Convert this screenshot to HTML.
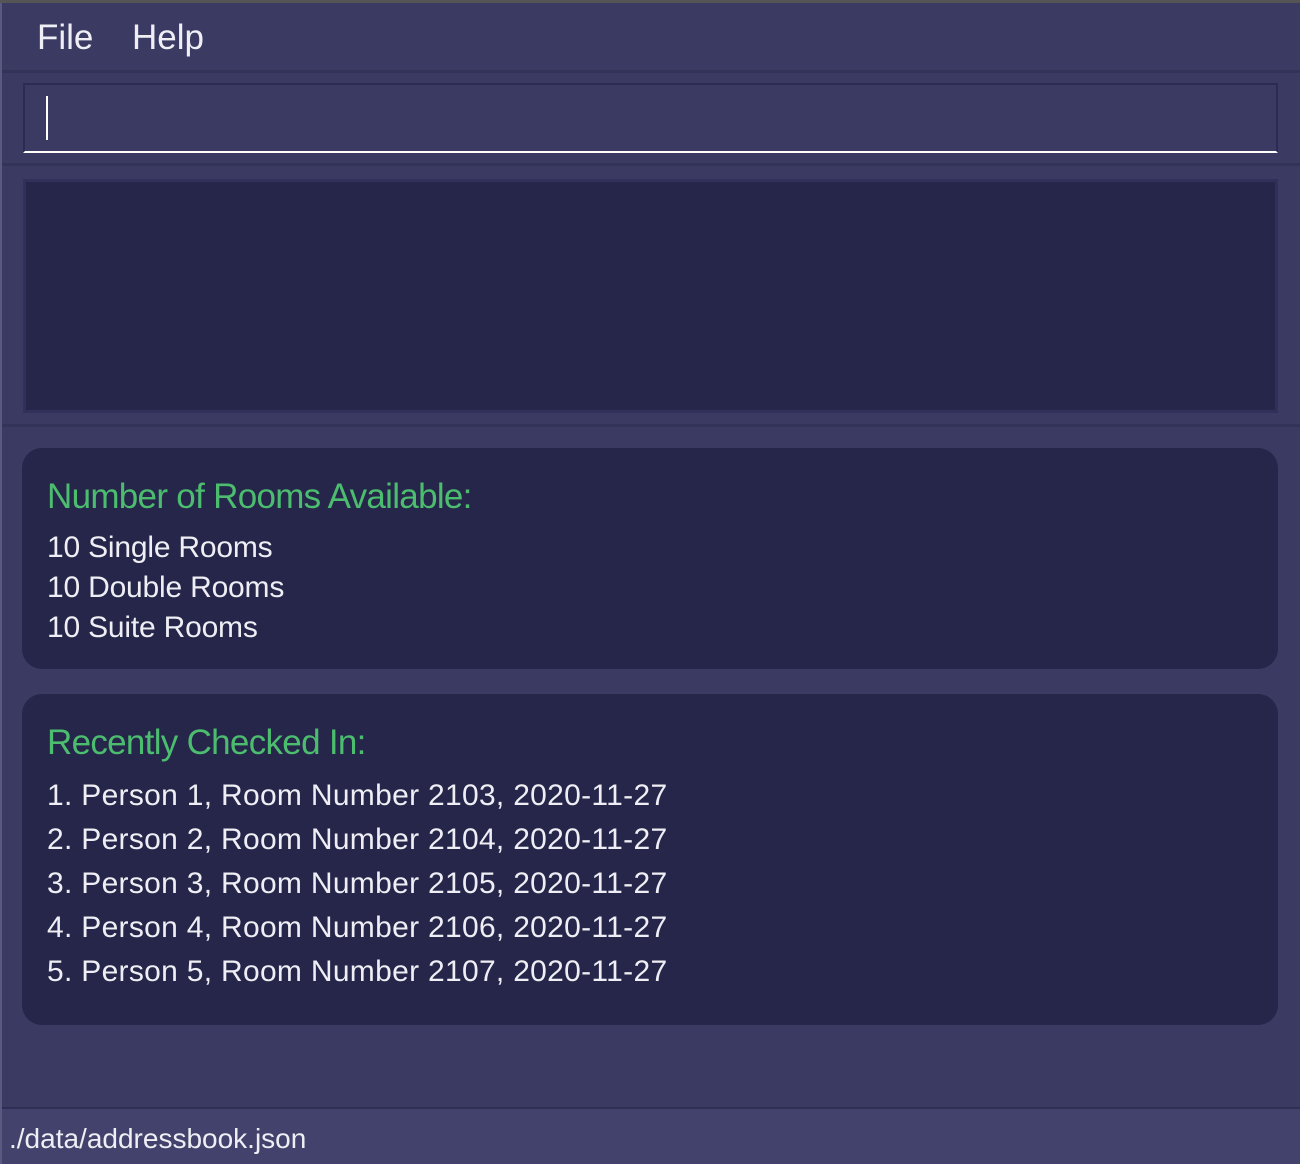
<!DOCTYPE html>
<html><head><meta charset="utf-8"><style>
*{margin:0;padding:0;box-sizing:border-box}
body{width:1300px;height:1164px;background:#3a3a63;font-family:"Liberation Sans",sans-serif;position:relative;overflow:hidden;color:#eeeef4}
.topb{position:absolute;left:0;top:0;width:1300px;height:3px;background:#555}
.leftb{position:absolute;left:0;top:3px;width:2px;height:1161px;background:#5a5a80}
.menu{position:absolute;top:18px;font-size:35px;letter-spacing:0}
.sep{position:absolute;left:2px;right:0;height:3px;background:#33335a}
.cmd{position:absolute;left:23px;top:83px;width:1255px;height:70px;border:2px solid #2c2c52;border-bottom:2px solid #fff;background:#3a3a63}
.caret{position:absolute;left:46px;top:96px;width:2px;height:44px;background:#fff}
.res{position:absolute;left:23px;top:179px;width:1255px;height:234px;background:#25264a;border:3px solid #30315a}
.card{position:absolute;left:22px;width:1256px;background:#25264a;border-radius:20px;padding-left:25px}
.h{color:#4cbd6f;font-size:35px;letter-spacing:-0.7px}
.l{font-size:30px}
.status{position:absolute;left:2px;top:1107px;width:1298px;height:57px;background:#42426c;border-top:2px solid #2f2f55}
.status span{position:absolute;left:7px;top:14px;font-size:28px;letter-spacing:0}
</style></head><body>
<div class="topb"></div><div class="leftb"></div>
<div class="menu" style="left:37px">File</div>
<div class="menu" style="left:132px">Help</div>
<div class="sep" style="top:70px"></div>
<div class="cmd"></div><div class="caret"></div>
<div class="sep" style="top:163px"></div>
<div class="res"></div>
<div class="sep" style="top:424px"></div>
<div class="card" style="top:448px;height:221px;padding-top:28px">
<div class="h" style="line-height:42px">Number of Rooms Available:</div>
<div class="l" style="line-height:40px;margin-top:10px;letter-spacing:-0.2px">10 Single Rooms<br>10 Double Rooms<br>10 Suite Rooms</div>
</div>
<div class="card" style="top:694px;height:331px;padding-top:28px">
<div class="h" style="line-height:42px">Recently Checked In:</div>
<div class="l" style="line-height:44px;margin-top:10px;letter-spacing:0.3px">1. Person 1, Room Number 2103, 2020-11-27<br>2. Person 2, Room Number 2104, 2020-11-27<br>3. Person 3, Room Number 2105, 2020-11-27<br>4. Person 4, Room Number 2106, 2020-11-27<br>5. Person 5, Room Number 2107, 2020-11-27</div>
</div>
<div class="status"><span>./data/addressbook.json</span></div>
</body></html>
